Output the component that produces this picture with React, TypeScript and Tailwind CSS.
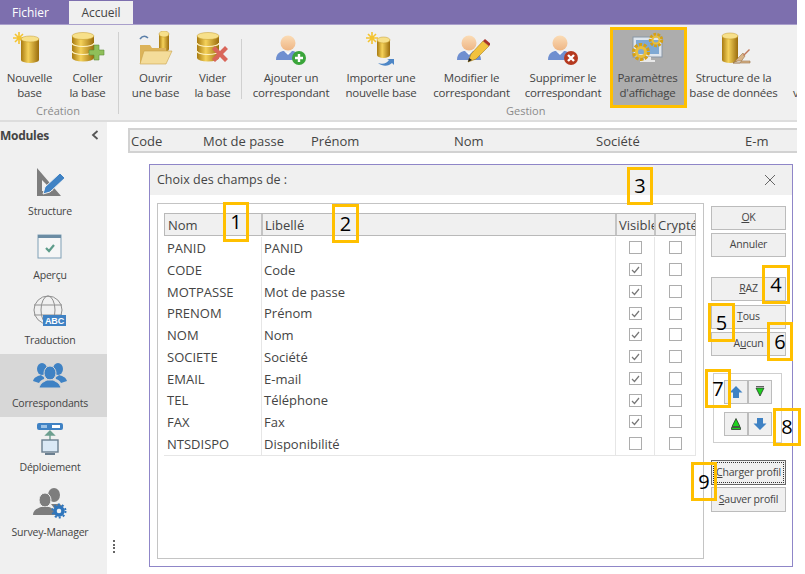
import type { ReactNode } from "react";

const font = "font-['Open_Sans','Liberation_Sans',sans-serif]";

function Defs() {
  return (
    <svg width="0" height="0" className="absolute">
      <defs>
        <linearGradient id="gold" x1="0" x2="1" y1="0" y2="0">
          <stop offset="0" stopColor="#a87a10" />
          <stop offset="0.4" stopColor="#f5d25a" />
          <stop offset="1" stopColor="#9a6c0c" />
        </linearGradient>
        <linearGradient id="skin" x1="0" x2="0" y1="0" y2="1">
          <stop offset="0" stopColor="#fbdcb6" />
          <stop offset="1" stopColor="#eeb584" />
        </linearGradient>
      </defs>
    </svg>
  );
}

function Cylinder({ x, y, w, h }: { x: number; y: number; w: number; h: number }) {
  return (
    <g>
      <path d={`M${x} ${y}v${h}a${w / 2} 3 0 0 0 ${w} 0v${-h}z`} fill="url(#gold)" />
      <ellipse cx={x + w / 2} cy={y} rx={w / 2} ry={3} fill="#f7e08a" stroke="#c49a2c" strokeWidth="0.5" />
    </g>
  );
}

function Spark({ x, y }: { x: number; y: number }) {
  return (
    <g stroke="#f4c430" strokeWidth="1.6">
      <path d={`M${x} ${y - 6}v12M${x - 6} ${y}h12M${x - 4} ${y - 4}l8 8M${x - 4} ${y + 4}l8 -8`} />
    </g>
  );
}

function Stack({ x = 2 }: { x?: number }) {
  return (
    <g>
      <path d={`M${x} 5v22a11 3.5 0 0 0 22 0v-22z`} fill="url(#gold)" />
      <path d={`M${x} 12a11 3.5 0 0 0 22 0M${x} 20a11 3.5 0 0 0 22 0`} stroke="#fff3c4" strokeWidth="1.2" fill="none" />
      <ellipse cx={x + 11} cy="5" rx="11" ry="3.5" fill="#f7e08a" stroke="#c49a2c" strokeWidth="0.5" />
    </g>
  );
}

function Person() {
  return (
    <g>
      <circle cx="13" cy="9" r="7.5" fill="url(#skin)" />
      <path d="M1 26c0-7 5-9 8-9l4 3 4-3c3 0 8 2 8 9z" fill="#6f8fd0" />
      <path d="M9 17l4 4 4-4-4 2z" fill="#fff" />
    </g>
  );
}

function Icon({ name }: { name: string }) {
  const cls = "w-[36px] h-[36px]";
  if (name === "new")
    return (
      <svg viewBox="0 0 36 36" className={cls}>
        <Spark x={7} y={7} />
        <Cylinder x={9} y={8} w={18} h={21} />
      </svg>
    );
  if (name === "paste")
    return (
      <svg viewBox="0 0 36 36" className={cls}>
        <Stack x={2} />
        <path d="M19 19h5v-5h5v5h5v5h-5v5h-5v-5h-5z" fill="#8fbf5a" stroke="#5f8f3a" strokeWidth="0.6" />
      </svg>
    );
  if (name === "open")
    return (
      <svg viewBox="0 0 36 36" className={cls}>
        <path d="M2 8c3-4 6-3 8-1" stroke="#5b7fa8" strokeWidth="1.6" fill="none" />
        <Cylinder x={21} y={3} w={10} h={15} />
        <path d="M2 14h10l2 3h14v15h-26z" fill="#dcb35a" />
        <path d="M6 20h28l-6 13h-26z" fill="#f4dc9a" stroke="#c9a24c" strokeWidth="0.6" />
      </svg>
    );
  if (name === "empty")
    return (
      <svg viewBox="0 0 36 36" className={cls}>
        <Stack x={2} />
        <path d="M17 18l3-3 5 5 5-5 3 3-5 5 5 5-3 3-5-5-5 5-3-3 5-5z" fill="#d9665a" />
      </svg>
    );
  if (name === "add" || name === "del" || name === "edit")
    return (
      <svg viewBox="0 0 36 36" className={cls}>
        <g transform="translate(2 3)">
          <Person />
        </g>
        {name === "add" && (
          <g>
            <circle cx="26" cy="27" r="7" fill="#3aa53a" />
            <path d="M26 23v8M22 27h8" stroke="#fff" strokeWidth="2.4" />
          </g>
        )}
        {name === "del" && (
          <g>
            <circle cx="26" cy="27" r="7" fill="#b5391f" />
            <path d="M23 24l6 6M29 24l-6 6" stroke="#fff" strokeWidth="2.4" />
          </g>
        )}
        {name === "edit" && (
          <g>
            <path d="M14 31l3-8 12-13 6 5-13 13z" fill="#f2c23e" stroke="#a8801c" strokeWidth="0.6" />
            <path d="M29 10l2-2 6 5-2 2z" fill="#a83228" />
            <path d="M14 31l1-4 3 2z" fill="#222" />
          </g>
        )}
      </svg>
    );
  if (name === "import")
    return (
      <svg viewBox="0 0 36 36" className={cls}>
        <Spark x={9} y={7} />
        <Cylinder x={14} y={9} w={13} h={15} />
        <path d="M15 32c5 2 9 0 11-3l-2-1h7v6l-2-2c-3 3-9 4-14 0z" fill="#4d86c6" />
      </svg>
    );
  if (name === "params")
    return (
      <svg viewBox="0 0 36 36" className={cls}>
        <rect x="3" y="6" width="29" height="20" fill="#dfe6ee" stroke="#8a97a6" />
        <rect x="6" y="9" width="23" height="14" fill="#7fa9d4" />
        <path d="M14 26h7v3h4v2h-15v-2h4z" fill="#e8e8e8" />
        <circle cx="11" cy="21" r="7" fill="none" stroke="#d4a017" strokeWidth="4" strokeDasharray="3 1.4" />
        <circle cx="11" cy="21" r="4.5" fill="none" stroke="#e9bf3c" strokeWidth="3" />
        <circle cx="26" cy="9" r="5.5" fill="none" stroke="#d4a017" strokeWidth="3.4" strokeDasharray="2.6 1.2" />
        <circle cx="26" cy="9" r="3.5" fill="none" stroke="#e9bf3c" strokeWidth="2" />
      </svg>
    );
  return (
    <svg viewBox="0 0 36 36" className={cls}>
      <Cylinder x={6} y={5} w={16} h={24} />
      <path d="M17 32l10-10 2 3-5 7zM17 32h17v-2h-14z" fill="#d8b48a" stroke="#9a7448" strokeWidth="0.6" />
      <path d="M27 24l6-6 1 1-6 6z" fill="#c0785a" />
    </svg>
  );
}

function RibbonBtn({ w, icon, a, b, active }: { w: number; icon: string; a: string; b: string; active?: boolean }) {
  return (
    <div
      style={{ width: w }}
      className={`shrink-0 h-[76px] flex flex-col items-center text-[11.5px] leading-[15px] text-[#444] tracking-[-0.2px] whitespace-nowrap ${active ? "bg-[#adadad]" : ""}`}
    >
      <div className="h-[41px] pt-[2px] flex items-start justify-center">
        <Icon name={icon} />
      </div>
      <span>{a}</span>
      <span>{b}</span>
    </div>
  );
}

function Ribbon() {
  return (
    <div className="h-[97px] bg-[#f0f0f0] border-b-2 border-[#dddddd] flex pt-[4px] overflow-hidden">
      <div className="w-[116px] shrink-0 flex flex-col items-center">
        <div className="flex">
          <RibbonBtn w={59} icon="new" a="Nouvelle" b="base" />
          <RibbonBtn w={57} icon="paste" a="Coller" b="la base" />
        </div>
        <span className="text-[11px] leading-[14px] -mt-[1px] text-[#8a8a8a]">Création</span>
      </div>
      <div className="w-[1px] h-[82px] ml-[2px] mt-[3px] bg-[#d0d0d0] shrink-0" />
      <div className="flex flex-col ml-[8px]">
        <div className="flex">
          <RibbonBtn w={57} icon="open" a="Ouvrir" b="une base" />
          <RibbonBtn w={57} icon="empty" a="Vider" b="la base" />
          <div className="w-[1px] h-[60px] mt-[10px] bg-[#d0d0d0] shrink-0" />
          <div className="w-[4px] shrink-0" />
          <RibbonBtn w={90} icon="add" a="Ajouter un" b="correspondant" />
          <RibbonBtn w={90} icon="import" a="Importer une" b="nouvelle base" />
          <RibbonBtn w={91} icon="edit" a="Modifier le" b="correspondant" />
          <RibbonBtn w={92} icon="del" a="Supprimer le" b="correspondant" />
          <div className="w-[1px] shrink-0" />
          <RibbonBtn w={75} icon="params" a="Paramètres" b="d'affichage" active />
          <RibbonBtn w={97} icon="struct" a="Structure de la" b="base de données" />
          <div className="pl-[11px] pt-[56px] text-[11.5px] leading-[15px] text-[#444]">v</div>
        </div>
        <span className="text-[11px] leading-[14px] -mt-[1px] text-[#8a8a8a] ml-[379px]">Gestion</span>
      </div>
    </div>
  );
}

function ModuleIcon({ name }: { name: string }) {
  if (name === "Structure")
    return (
      <svg viewBox="0 0 32 32" className="w-[32px] h-[32px]">
        <path d="M3 1v28h24zM8 13v11h11z" fill="#7d7d7d" fillRule="evenodd" />
        <path d="M9 27l2-7 15-14 5 5-15 14z" fill="#3f82c4" stroke="#f0f0f0" />
      </svg>
    );
  if (name === "Aperçu")
    return (
      <svg viewBox="0 0 26 26" className="w-[26px] h-[26px]">
        <rect x="1" y="1" width="23" height="23" fill="#f6f6f6" stroke="#7f9fb5" />
        <rect x="1" y="1" width="23" height="3" fill="#6b8ca3" />
        <path d="M9 14l3 3 5-6" stroke="#5d9c8a" strokeWidth="2.2" fill="none" />
      </svg>
    );
  if (name === "Traduction")
    return (
      <svg viewBox="0 0 34 32" className="w-[34px] h-[32px]">
        <g fill="none" stroke="#8f8f8f">
          <circle cx="15" cy="15" r="14" />
          <ellipse cx="15" cy="15" rx="7" ry="14" />
          <path d="M1 10h28M1 20h28" />
        </g>
        <rect x="10" y="20" width="23" height="11" fill="#3f82c4" />
        <text x="21.5" y="29" textAnchor="middle" fontSize="9" fontWeight="700" fill="#fff" fontFamily="Liberation Sans">ABC</text>
      </svg>
    );
  if (name === "Correspondants")
    return (
      <svg viewBox="0 0 34 28" className="w-[34px] h-[28px]">
        <g fill="#3f82c4">
          <ellipse cx="9" cy="8" rx="5" ry="6" />
          <ellipse cx="25" cy="8" rx="5" ry="6" />
          <path d="M0 20c1-4 5-5 8-6 2 2 4 2 3 4-3 1-4 2-5 4zM34 20c-1-4-5-5-8-6-2 2-4 2-3 4 3 1 4 2 5 4z" />
          <ellipse cx="17" cy="12" rx="6" ry="7" stroke="#d6d6d6" />
          <path d="M6 27c1-5 6-7 8-8h6c2 1 7 3 8 8z" stroke="#d6d6d6" />
        </g>
      </svg>
    );
  if (name === "Déploiement")
    return (
      <svg viewBox="0 0 28 34" className="w-[28px] h-[34px]">
        <rect x="1" y="1" width="26" height="7" rx="2" fill="#3f82c4" />
        <rect x="16" y="3" width="8" height="3" fill="#fff" />
        <rect x="5" y="3" width="6" height="3" fill="#9cc2e6" />
        <path d="M14 9l-4 4h8zM14 12v6" stroke="#6d9f8f" strokeWidth="1.4" fill="#6d9f8f" />
        <rect x="6" y="18" width="16" height="12" fill="#dbe9f6" stroke="#6b7f90" strokeWidth="1.4" />
        <rect x="9" y="31" width="10" height="2" fill="#6b7f90" />
      </svg>
    );
  return (
    <svg viewBox="0 0 34 32" className="w-[34px] h-[32px]">
      <g fill="#7d7d7d">
        <ellipse cx="21" cy="8" rx="6" ry="7" />
        <ellipse cx="12" cy="13" rx="6" ry="7" stroke="#f0f0f0" />
        <path d="M0 28c0-5 5-7 8-8h8c3 1 7 3 7 8z" />
        <path d="M18 17h8c3 1 4 2 4 4h-9z" />
      </g>
      <circle cx="26" cy="24" r="4" fill="none" stroke="#2f76bd" strokeWidth="3.4" />
      <circle cx="26" cy="24" r="6.5" fill="none" stroke="#2f76bd" strokeWidth="2" strokeDasharray="2 2.1" />
    </svg>
  );
}

const modules = [
  { name: "Structure", h: 64 },
  { name: "Aperçu", h: 64 },
  { name: "Traduction", h: 65 },
  { name: "Correspondants", h: 63 },
  { name: "Déploiement", h: 64 },
  { name: "Survey-Manager", h: 65 },
];

function Sidebar() {
  return (
    <div className="w-[107px] shrink-0 bg-[#f0f0f0]">
      <div className="h-[25px] flex items-center justify-between pr-[8px] text-[12px] font-bold text-[#444] tracking-[-0.3px]">
        <span className="mt-[2px]">Modules</span>
        <svg viewBox="0 0 8 10" className="w-[8px] h-[10px]">
          <path d="M6.5 1L2 5l4.5 4" stroke="#555" strokeWidth="1.8" fill="none" />
        </svg>
      </div>
      <div className="mt-[14px] flex flex-col">
        {modules.map((m) => (
          <div
            key={m.name}
            style={{ height: m.h }}
            className={`flex flex-col items-center justify-end pb-[7px] pr-[7px] text-[10.5px] leading-[14px] tracking-[-0.2px] text-[#444] ${m.name === "Correspondants" ? "bg-[#d7d7d7]" : ""}`}
          >
            <div className="flex-1 flex items-center justify-center">
              <ModuleIcon name={m.name} />
            </div>
            <span>{m.name}</span>
          </div>
        ))}
      </div>
    </div>
  );
}

const rows = [
  ["PANID", "PANID", false],
  ["CODE", "Code", true],
  ["MOTPASSE", "Mot de passe", true],
  ["PRENOM", "Prénom", true],
  ["NOM", "Nom", true],
  ["SOCIETE", "Société", true],
  ["EMAIL", "E-mail", true],
  ["TEL", "Téléphone", true],
  ["FAX", "Fax", true],
  ["NTSDISPO", "Disponibilité", false],
] as const;

function Check({ on }: { on?: boolean }) {
  return (
    <div className="w-[13px] h-[13px] border border-[#adadad] bg-white flex items-center justify-center">
      {on && (
        <svg viewBox="0 0 11 11" className="w-[11px] h-[11px]">
          <path d="M2 6l2.5 2.5L9 3" stroke="#777" strokeWidth="1.2" fill="none" />
        </svg>
      )}
    </div>
  );
}

function FieldTable() {
  return (
    <div className="text-[13px] text-[#444]">
      <div className="h-[23px] flex bg-[#f0f0f0] border border-[#b9b9b9] overflow-hidden">
        <div className="w-[98px] shrink-0 border-r-2 border-[#c4c4c4] pl-[3px] leading-[23px]">Nom</div>
        <div className="w-[354px] shrink-0 border-r-2 border-[#c4c4c4] pl-[2px] leading-[23px]">Libellé</div>
        <div className="w-[39px] shrink-0 border-r-2 border-[#c4c4c4] pl-[2px] leading-[23px] overflow-hidden whitespace-nowrap">Visible</div>
        <div className="flex-1 min-w-0 pl-[2px] leading-[23px] overflow-hidden whitespace-nowrap">Crypté</div>
      </div>
      <div className="border-b border-r border-[#e6e6e6] pt-[1px]">
        {rows.map(([nom, lib, vis]) => (
          <div key={nom} className="h-[21.75px] flex items-center">
            <div className="w-[98px] shrink-0 h-full border-r border-[#e6e6e6] pl-[3px] leading-[22px]">{nom}</div>
            <div className="w-[354px] shrink-0 h-full border-r border-[#e6e6e6] pl-[2px] leading-[22px]">{lib}</div>
            <div className="w-[39px] shrink-0 h-full border-r border-[#e6e6e6] flex items-center justify-center">
              <Check on={vis} />
            </div>
            <div className="flex-1 h-full flex items-center justify-center">
              <Check />
            </div>
          </div>
        ))}
      </div>
    </div>
  );
}

function Btn({ children, focus, tall }: { children: ReactNode; focus?: boolean; tall?: boolean }) {
  return (
    <div
      className={`w-[75px] bg-[#f0f0f0] border flex items-center justify-center text-[10.5px] tracking-[-0.2px] text-[#444] whitespace-nowrap ${tall ? "h-[25px]" : "h-[24px]"} ${focus ? "border-[#666] outline-1 outline-dotted -outline-offset-3 outline-[#333]" : "border-[#bcbcbc]"}`}
    >
      {children}
    </div>
  );
}

function ArrowBtn({ kind }: { kind: "blueUp" | "blueDown" | "greenUp" | "greenDown" }) {
  return (
    <div className="w-[24px] h-[24px] bg-[#f0f0f0] border border-[#bcbcbc] flex items-center justify-center">
      <svg viewBox="0 0 14 14" className="w-[14px] h-[14px]">
        {kind === "blueUp" && <path d="M7 1l6.5 6.5H10V13H4V7.5H.5z" fill="#3f82c4" />}
        {kind === "blueDown" && <path d="M7 13l6.5-6.5H10V1H4v5.500H.5z" fill="#3f82c4" />}
        {kind === "greenDown" && <path d="M3 3h8l-4 8zM3 1.500h8" fill="#1fd11f" stroke="#222" strokeWidth="0.7" />}
        {kind === "greenUp" && <path d="M7 1.500l4 8H3zM2.500 10.500h9v2h-9z" fill="#1fd11f" stroke="#222" strokeWidth="0.7" />}
      </svg>
    </div>
  );
}

function ActionColumn() {
  return (
    <div className="w-[75px] ml-[7px] mt-[3px] flex flex-col">
      <Btn><span><u>O</u>K</span></Btn>
      <div className="h-[3px] shrink-0" />
      <Btn>Annuler</Btn>
      <div className="h-[20px] shrink-0" />
      <Btn><span><u>R</u>AZ</span></Btn>
      <div className="h-[4px] shrink-0" />
      <Btn><span><u>T</u>ous</span></Btn>
      <div className="h-[3px] shrink-0" />
      <Btn><span>A<u>u</u>cun</span></Btn>
      <div className="w-[69px] h-[70px] ml-[2px] mt-[17px] border border-[#cfcfcf] pt-[6px] pl-[10px] flex flex-col gap-[8px]">
        <div className="flex">
          <ArrowBtn kind="blueUp" />
          <ArrowBtn kind="greenDown" />
        </div>
        <div className="flex">
          <ArrowBtn kind="greenUp" />
          <ArrowBtn kind="blueDown" />
        </div>
      </div>
      <div className="h-[17px] shrink-0" />
      <Btn focus tall><span><u>C</u>harger profil</span></Btn>
      <div className="h-[2px] shrink-0" />
      <Btn tall><span><u>S</u>auver profil</span></Btn>
    </div>
  );
}

function Dialog() {
  return (
    <div className="ml-[21px] mt-[11px] w-[644px] h-[403px] border border-[#8f86c8] bg-white flex flex-col">
      <div className="h-[30px] shrink-0 bg-[#f0f0f0] flex items-center justify-between pl-[7px] pr-[16px] text-[12.5px] text-[#444]">
        <span>Choix des champs de :</span>
        <svg viewBox="0 0 12 12" className="w-[12px] h-[12px]">
          <path d="M1 1l10 10M11 1L1 11" stroke="#666" strokeWidth="1" />
        </svg>
      </div>
      <div className="flex pl-[7px] pt-[8px]">
        <div className="w-[547px] h-[356px] border border-[#c4c4c4] pl-[6px] pt-[9px] pr-[7px]">
          <FieldTable />
        </div>
        <ActionColumn />
      </div>
    </div>
  );
}

function Mark({ x, y, w, h, n }: { x: number; y: number; w: number; h: number; n?: string }) {
  return (
    <div
      style={{ left: x, top: y, width: w, height: h }}
      className="absolute border-[3px] border-[#ffc000] flex items-center justify-center text-[20px] text-black"
    >
      {n}
    </div>
  );
}

const marks = [
  { x: 610, y: 27, w: 77, h: 81 },
  { x: 223, y: 202, w: 26, h: 40, n: "1" },
  { x: 332, y: 204, w: 27, h: 39, n: "2" },
  { x: 627, y: 167, w: 26, h: 38, n: "3" },
  { x: 762, y: 265, w: 28, h: 39, n: "4" },
  { x: 708, y: 303, w: 27, h: 39, n: "5" },
  { x: 767, y: 322, w: 26, h: 39, n: "6" },
  { x: 705, y: 369, w: 26, h: 39, n: "7" },
  { x: 773, y: 408, w: 28, h: 38, n: "8" },
  { x: 691, y: 462, w: 26, h: 39, n: "9" },
];

export default function App() {
  return (
    <div className={`relative w-[805px] h-[574px] overflow-hidden bg-white ${font}`}>
      <Defs />
      <div className="w-[797px] h-full flex flex-col">
        <div className="h-[25px] shrink-0 bg-[#7d6fae] border-b border-[#a99fcb] flex items-end text-[12px]">
          <div className="w-[69px] h-[23px] flex items-center pl-[12px] text-white">Fichier</div>
          <div className="w-[64px] h-[23px] bg-[#f0f0f0] flex items-center justify-center text-[#444]">Accueil</div>
        </div>
        <Ribbon />
        <div className="flex flex-1 min-h-0">
          <Sidebar />
          <div className="w-[18px] shrink-0 relative">
            <div className="absolute left-[6px] top-[418px] flex flex-col gap-[1.5px]">
              {[0, 1, 2, 3].map((i) => (
                <div key={i} className="w-[2px] h-[2px] bg-[#666]" />
              ))}
            </div>
          </div>
          <div className="flex-1 min-w-0 pt-[6px] pl-[3px]">
            <div className="h-[25px] bg-[#f0f0f0] border-t-2 border-b-2 border-l-2 border-[#d2d2d2] flex items-center pt-[2px] text-[13px] text-[#444] whitespace-nowrap overflow-hidden">
              <div className="w-[73px] shrink-0 pl-[1px]">Code</div>
              <div className="w-[108px] shrink-0">Mot de passe</div>
              <div className="w-[143px] shrink-0">Prénom</div>
              <div className="w-[142px] shrink-0">Nom</div>
              <div className="w-[149px] shrink-0">Société</div>
              <div className="shrink-0">E-m</div>
            </div>
            <Dialog />
          </div>
        </div>
      </div>
      {marks.map((m) => (
        <Mark key={`${m.x}-${m.y}`} {...m} />
      ))}
    </div>
  );
}
